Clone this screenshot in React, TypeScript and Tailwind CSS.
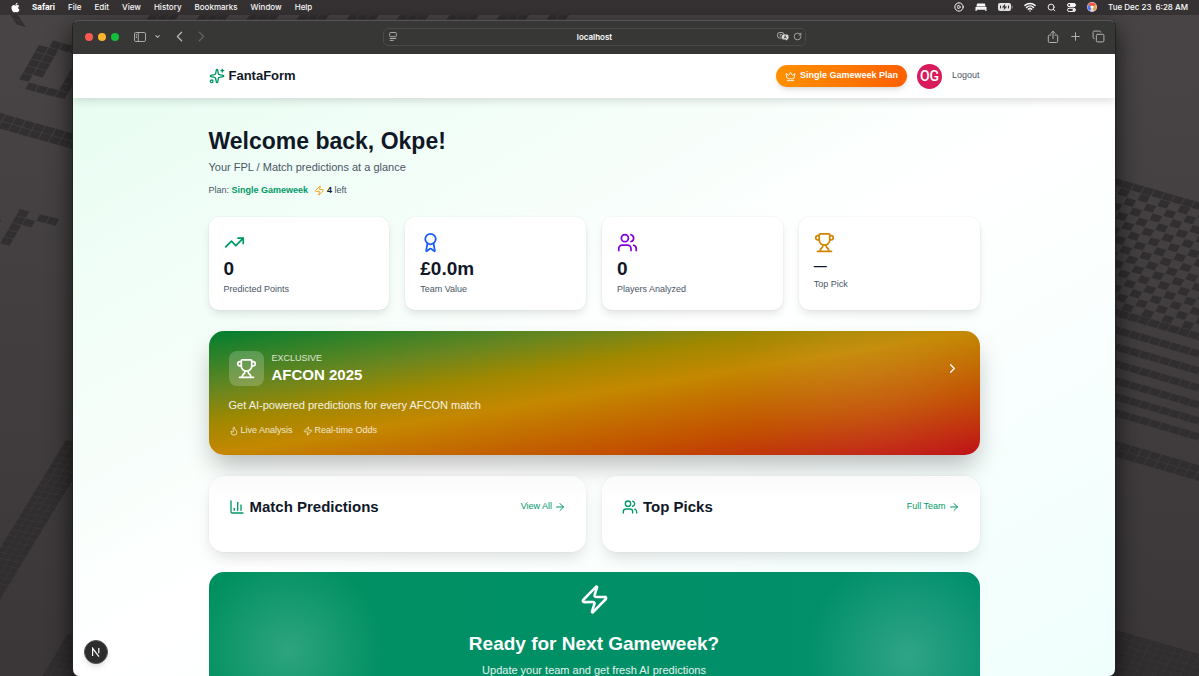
import type { ReactNode } from "react";
import {
  ArrowRight,
  Award,
  ChartColumn,
  ChevronDown,
  ChevronLeft,
  ChevronRight,
  CirclePlay,
  Copy,
  Crown,
  Flame,
  Plus,
  RotateCw,
  Search,
  Share,
  Sparkles,
  TrendingUp,
  Trophy,
  Users,
  Wifi,
  Zap,
} from "lucide-react";
import { FaApple } from "react-icons/fa";

type Cell = [number, number];

const block = (cols: number, rows: number, keep: (c: number, r: number) => boolean = () => true): Cell[] => {
  const cells: Cell[] = [];
  for (let r = 0; r < rows; r++) for (let c = 0; c < cols; c++) if (keep(c, r)) cells.push([c, r]);
  return cells;
};

const glyphRing: Cell[] = [
  [1, 0], [2, 0], [3, 0],
  [0, 1], [1, 1], [0, 2], [1, 2], [0, 3], [1, 3], [0, 4], [1, 4], [0, 5],
  [4, 3], [4, 4], [4, 5],
  [1, 6], [2, 6], [3, 6], [4, 6],
];

const glyphHook: Cell[] = [
  [0, 0], [0, 1], [1, 1], [0, 2], [0, 3], [0, 4], [-2, 2], [2, 0], [3, 0],
];

function Tiles({ cells, matrix }: { cells: Cell[]; matrix: string }) {
  return (
    <g transform={matrix}>
      {cells.map(([c, r]) => (
        <rect key={`${c}:${r}`} x={c} y={r} width={0.92} height={0.92} />
      ))}
    </g>
  );
}

function Wallpaper() {
  return (
    <svg
      className="pointer-events-none absolute inset-0 size-full"
      viewBox="0 0 1199 676"
      preserveAspectRatio="xMidYMid slice"
      aria-hidden="true"
    >
      <defs>
        <linearGradient id="desk" x1="0" y1="0" x2="0" y2="1">
          <stop offset="0" stopColor="#494546" />
          <stop offset="1" stopColor="#3b3738" />
        </linearGradient>
      </defs>
      <rect width="1199" height="676" fill="url(#desk)" />
      <g fill="#322f30">
        <Tiles cells={[[0, 0], [0, 1]]} matrix="matrix(10 2.6 4 6 9 13)" />
        <Tiles cells={glyphRing} matrix="matrix(10 2.6 -4 7 43 38)" />
        <Tiles cells={block(9, 2)} matrix="matrix(10 2.8 -4 7 -4 112)" />
        <Tiles cells={glyphHook} matrix="matrix(10 2.6 -4 7 20 209)" />
        <Tiles cells={block(42, 1, (c) => c % 5 < 3)} matrix="matrix(10 0 -4 5 150 15)" />
      </g>
      <g fill="#312e2f">
        <Tiles cells={block(4, 34)} matrix="matrix(7 1.4 -3.4 5.6 66 440)" />
        <Tiles cells={block(4, 10)} matrix="matrix(7 1.4 -3.4 5.6 68 634)" />
        <Tiles
          cells={block(19, 17, (c, r) => r === 0 || r === 16 || (c + r) % 2 === 0)}
          matrix="matrix(10 2.9 -4 7 1115 178)"
        />
        {[325, 342, 359, 376, 392, 408].map((y) => (
          <Tiles key={y} cells={block(10, 1)} matrix={`matrix(10 2.9 -4 7 1112 ${y})`} />
        ))}
        <Tiles cells={block(11, 2)} matrix="matrix(10 2.9 -4 7 1112 440)" />
        <Tiles cells={block(16, 12)} matrix="matrix(8 2.3 -3 6 1112 629)" />
      </g>
    </svg>
  );
}

const menus = ["File", "Edit", "View", "History", "Bookmarks", "Window", "Help"];

function MenuBar() {
  return (
    <header className="relative flex h-[15px] shrink-0 items-center justify-between bg-[#363233] pr-[11px] pb-[1px] pl-[10px] font-[Inter,'Liberation_Sans',sans-serif] text-[8px] leading-none font-medium text-white">
      <nav aria-label="Menu bar" className="flex items-center gap-[13px]">
        <button type="button" aria-label="Apple menu" className="mr-[-2px]">
          <FaApple size={11} />
        </button>
        <button type="button" className="font-bold">Safari</button>
        {menus.map((m) => (
          <button key={m} type="button">{m}</button>
        ))}
      </nav>
      <div className="flex items-center gap-[11px]">
        <CirclePlay size={10} strokeWidth={2.4} />
        <svg width="12" height="8" viewBox="0 0 12 8" fill="currentColor" aria-hidden="true">
          <path d="M2.2 0.5h7.6l0.9 3H1.300z" />
          <path d="M0.500 4h11v4h-1.200V6.800H1.700V8H0.500z" />
        </svg>
        <svg width="15" height="8" viewBox="0 0 15 8" aria-hidden="true">
          <rect width="13" height="8" rx="2" fill="#e8e8e8" />
          <rect x="13.600" y="2.600" width="1" height="2.800" rx=".5" fill="#9a9a9a" />
          <path d="M7.200 0.800 3.800 4.500h2.300L5.600 7.300 9.200 3.500H6.800z" fill="#363233" />
          <rect x="2" y="2.600" width="1" height="2.800" fill="#363233" />
          <rect x="10" y="2.600" width="1" height="2.800" fill="#363233" />
        </svg>
        <Wifi size={12} strokeWidth={3} />
        <Search size={9} strokeWidth={2.500} />
        <svg width="9" height="9" viewBox="0 0 9 9" fill="none" stroke="currentColor" aria-hidden="true">
          <rect x=".5" y=".5" width="8" height="3.200" rx="1.600" fill="currentColor" />
          <circle cx="2.200" cy="2.100" r="1" fill="#363233" stroke="none" />
          <rect x=".5" y="5.300" width="8" height="3.200" rx="1.600" />
          <circle cx="6.800" cy="6.900" r="1.300" fill="currentColor" stroke="none" />
        </svg>
        <svg width="10" height="10" viewBox="0 0 10 10" aria-hidden="true">
          <circle cx="5" cy="5" r="5" fill="#e9e4ef" />
          <path d="M1 3a4.500 4.500 0 0 1 8 0L5 5z" fill="#f0563f" />
          <path d="M9 3a4.500 4.500 0 0 1-2 6L5 5z" fill="#f4a64a" />
          <path d="M1 3a4.500 4.500 0 0 0 2 6l2-4z" fill="#4b7df0" />
          <circle cx="5" cy="5" r="1.600" fill="#fff" />
        </svg>
        <time className="flex gap-1">
          <span>Tue Dec 23</span>
          <span>6:28 AM</span>
        </time>
      </div>
    </header>
  );
}

function Toolbar() {
  return (
    <div className="grid h-[33px] shrink-0 grid-cols-[1fr_minmax(0,423px)_1fr] items-center bg-[#373736] pb-[2px] text-[#b5b5b5]">
      <div className="flex items-center pl-3">
        <div className="flex gap-[5px]">
          <button type="button" aria-label="Close window" className="size-2 rounded-full bg-[#ff5a52]" />
          <button type="button" aria-label="Minimise window" className="size-2 rounded-full bg-[#fdb32c]" />
          <button type="button" aria-label="Zoom window" className="size-2 rounded-full bg-[#14bf3c]" />
        </div>
        <button type="button" aria-label="Sidebar" className="ml-[15px]">
          <svg width="12" height="10" viewBox="0 0 12 10" fill="none" stroke="currentColor" strokeWidth=".9">
            <rect x=".5" y=".5" width="11" height="9" rx="1.300" />
            <path d="M4.300.5v9M1.800 2.500h1.200M1.800 4h1.200M1.800 5.500h1.200" />
          </svg>
        </button>
        <button type="button" aria-label="Tab groups" className="ml-2">
          <ChevronDown size={7} strokeWidth={3.500} />
        </button>
        <button type="button" aria-label="Back" className="ml-[10px]">
          <ChevronLeft size={17} strokeWidth={1.800} />
        </button>
        <button type="button" aria-label="Forward" className="ml-[5px] text-[#626262]">
          <ChevronRight size={17} strokeWidth={1.800} />
        </button>
      </div>
      <div className="flex h-[18px] items-center gap-1 rounded-[5px] border border-[#484b49] pr-[3px] pl-[5px]">
        <svg width="8" height="9" viewBox="0 0 8 9" fill="none" stroke="currentColor" strokeWidth=".9" aria-hidden="true">
          <rect x=".7" y=".5" width="6.600" height="4.200" rx=".8" />
          <path d="M.7 6.500h6.600M.7 8.400h4" />
        </svg>
        <input
          aria-label="Address"
          defaultValue="localhost"
          className="ml-4 min-w-0 flex-1 bg-transparent text-center font-[Inter,'Liberation_Sans',sans-serif] text-[8px] font-semibold text-white outline-none"
        />
        <button type="button" aria-label="Translate">
          <svg width="12" height="9" viewBox="0 0 12 9">
            <rect x=".5" y=".5" width="6.500" height="5.500" rx="2" fill="none" stroke="#b5b5b5" strokeWidth=".9" />
            <path d="M2.200 2.500h3M3.700 1.700v.8M2.500 4.700l2-2M3 3.300l1.800 1.400" stroke="#b5b5b5" strokeWidth=".6" />
            <path d="M6.500 2.600H10a1.500 1.500 0 0 1 1.500 1.500v2A1.500 1.500 0 0 1 10 7.600v1.200L8.600 7.600H6.500A1.500 1.500 0 0 1 5 6.100v-2a1.500 1.500 0 0 1 1.500-1.500z" fill="#dcdcdc" />
            <path d="M7 6.500 8.200 3.600l1.200 2.900M7.400 5.600h1.600" fill="none" stroke="#373736" strokeWidth=".7" />
          </svg>
        </button>
        <button type="button" aria-label="Reload">
          <RotateCw size={9} strokeWidth={2.200} />
        </button>
      </div>
      <div className="flex items-center justify-end gap-[10px] pr-[10px]">
        <button type="button" aria-label="Share">
          <svg width="12" height="14" viewBox="0 0 12 14" fill="none" stroke="currentColor" strokeLinecap="round" strokeLinejoin="round">
            <path d="M4 5H2.500A1.200 1.200 0 0 0 1.300 6.200v5.100a1.200 1.200 0 0 0 1.200 1.200h7a1.200 1.200 0 0 0 1.200-1.200V6.200A1.200 1.200 0 0 0 9.500 5H8M6 8.500V1.300M4 3.200 6 1.200l2 2" />
          </svg>
        </button>
        <button type="button" aria-label="New tab"><Plus size={13} strokeWidth={1.800} /></button>
        <button type="button" aria-label="Tab overview"><Copy size={13} strokeWidth={1.800} /></button>
      </div>
    </div>
  );
}

function SiteHeader() {
  return (
    <header className="relative z-10 h-[44px] shrink-0 bg-white shadow-[0_3px_8px_rgba(0,0,0,0.13)]">
      <div className="mx-auto flex h-full max-w-[771px] items-center justify-between">
        <a href="#home" className="flex items-center gap-1 text-[13px] font-bold text-gray-900">
          <Sparkles size={16} className="text-emerald-600" />
          FantaForm
        </a>
        <div className="flex items-center gap-[10px]">
          <button
            type="button"
            className="flex h-[22px] items-center gap-1 rounded-full bg-linear-to-r from-[#ff9000] to-[#ff5f00] px-[9px] text-[9px] font-bold text-white shadow-md"
          >
            <Crown size={11} />
            Single Gameweek Plan
          </button>
          <span className="grid size-[25px] place-items-center rounded-full bg-[#d91b5b] font-[Roboto,'Liberation_Sans',sans-serif] text-[14px] font-medium text-white">
            OG
          </span>
          <button type="button" className="text-[9px] text-gray-600">Logout</button>
        </div>
      </div>
    </header>
  );
}

function Stat({ icon, value, label, small }: { icon: ReactNode; value: string; label: string; small?: boolean }) {
  return (
    <article className="rounded-[10px] bg-white pt-[15px] pr-4 pb-[14px] pl-[15px] shadow-[0_5px_9px_-1px_rgba(0,0,0,0.1),0_0_2px_rgba(0,0,0,0.08)]">
      <div className="mb-1">{icon}</div>
      <p className={small ? "text-[13px] leading-[18px] font-bold text-gray-900" : "text-[19px] leading-[23px] font-bold text-gray-900"}>
        {value}
      </p>
      <p className="mt-[3px] text-[9px] leading-[13px] text-gray-600">{label}</p>
    </article>
  );
}

function Panel({ icon, title, link }: { icon: ReactNode; title: string; link: string }) {
  return (
    <section className="rounded-[15px] bg-linear-to-b from-[#fafafa] to-white to-30% p-5 shadow-[0_8px_16px_-3px_rgba(0,0,0,0.13),0_0_2px_rgba(0,0,0,0.08)]">
      <div className="mb-[15px] flex items-center justify-between">
        <h2 className="flex items-center gap-[5px] text-[15px] leading-[21px] font-bold text-gray-900">
          {icon}
          {title}
        </h2>
        <a href="#more" className="flex items-center gap-[2px] text-[9px] text-emerald-600">
          {link}
          <ArrowRight size={12} />
        </a>
      </div>
    </section>
  );
}

function Banner() {
  return (
    <section className="relative overflow-hidden rounded-[15px] bg-[linear-gradient(to_bottom_right,#007e30,#688620_24%,#a08800_37%,#c48800_50%,#c25000_75%,#c01018)] px-5 pt-5 pb-[18px] text-white">
      <div className="absolute -top-3 right-5 h-[130px] w-[180px] rounded-full bg-white/7 blur-2xl" />
      <div className="relative">
        <div className="flex items-center justify-between">
          <div className="flex items-center gap-2">
            <span className="grid size-[35px] place-items-center rounded-[8px] bg-white/20">
              <Trophy size={21} />
            </span>
            <div>
              <p className="text-[9px] leading-[13px] text-white/80">EXCLUSIVE</p>
              <h2 className="text-[15px] leading-[20px] font-bold">AFCON 2025</h2>
            </div>
          </div>
          <a href="#afcon" aria-label="Open AFCON 2025">
            <ChevronRight size={15} />
          </a>
        </div>
        <p className="mt-[10px] text-[11px] leading-[18px] text-white/90">
          Get AI-powered predictions for every AFCON match
        </p>
        <div className="mt-[10px] flex gap-[10px] text-[9px] leading-[13px] text-white/80">
          <span className="flex items-center gap-[2px]"><Flame size={10} />Live Analysis</span>
          <span className="flex items-center gap-[2px]"><Zap size={10} />Real-time Odds</span>
        </div>
      </div>
    </section>
  );
}

function CallToAction() {
  return (
    <section className="rounded-[15px] bg-[radial-gradient(circle_at_80px_78px,rgba(255,255,255,0.18),transparent_96px),radial-gradient(circle_at_calc(100%-72px)_84px,rgba(255,255,255,0.19),transparent_104px),linear-gradient(to_right,#009060,#008f6c)] px-5 pt-3 pb-12 text-center text-white">
      <Zap size={31} className="mx-auto" />
      <h2 className="mt-4 text-[19px] leading-[25px] font-bold">Ready for Next Gameweek?</h2>
      <p className="mt-[5px] text-[11px] leading-[18px] text-white/90">Update your team and get fresh AI predictions</p>
    </section>
  );
}

export default function App() {
  return (
    <div className="relative flex h-screen flex-col overflow-hidden bg-[#3f3b3c] font-['Liberation_Sans',Arial,sans-serif]">
      <Wallpaper />
      <MenuBar />
      <div className="relative mt-[5px] mr-[83px] ml-[72px] flex min-h-0 flex-1 flex-col overflow-hidden rounded-[7px] border border-b-0 border-[#555] border-x-[#222] shadow-[0_8px_24px_rgba(0,0,0,0.7)]">
        <Toolbar />
        <SiteHeader />
        <main className="min-h-0 flex-1 overflow-hidden bg-linear-to-br from-[#e8fdf2] via-white to-[#effffc] px-4 pt-[30px]">
          <div className="mx-auto max-w-[771px]">
            <h1 className="text-[23px] leading-[26px] font-bold text-gray-900">Welcome back, Okpe!</h1>
            <p className="mt-1 text-[11px] leading-[18px] text-gray-600">Your FPL / Match predictions at a glance</p>
            <div className="mt-[8px] flex gap-[6px] text-[9px] leading-[13px] text-gray-600">
              <p>Plan: <strong className="text-emerald-600">Single Gameweek</strong></p>
              <p className="flex items-center gap-[2px]">
                <Zap size={11} className="text-amber-500" />
                <span><strong className="text-gray-900">4</strong> left</span>
              </p>
            </div>

            <div className="mt-5 grid grid-cols-4 gap-4">
              <Stat icon={<TrendingUp size={21} className="text-emerald-600" />} value="0" label="Predicted Points" />
              <Stat icon={<Award size={21} className="text-blue-600" />} value="£0.0m" label="Team Value" />
              <Stat icon={<Users size={21} className="text-purple-700" />} value="0" label="Players Analyzed" />
              <Stat icon={<Trophy size={21} className="text-yellow-600" />} value="—" label="Top Pick" small />
            </div>

            <div className="mt-[21px] rounded-[15px] shadow-[0_14px_26px_-4px_rgba(0,0,0,0.28)]">
              <Banner />
            </div>

            <div className="relative mt-[21px] grid grid-cols-2 gap-4">
              <Panel icon={<ChartColumn size={16} className="text-emerald-600" />} title="Match Predictions" link="View All" />
              <Panel icon={<Users size={16} className="text-emerald-600" />} title="Top Picks" link="Full Team" />
            </div>

            <div className="mt-5">
              <CallToAction />
            </div>
          </div>
        </main>
        <button
          type="button"
          aria-label="Open Next.js dev tools"
          className="absolute bottom-3 left-[11px] z-10 grid size-6 place-items-center rounded-full border border-[#555] bg-[#2d2d2d] shadow-md"
        >
          <svg width="10" height="10" viewBox="0 0 10 10" fill="none" stroke="#fff" strokeWidth="1.200">
            <path d="M1.600 9V1.300L8 9.600" />
            <path d="M7.800 1v5.200" />
          </svg>
        </button>
      </div>
    </div>
  );
}
